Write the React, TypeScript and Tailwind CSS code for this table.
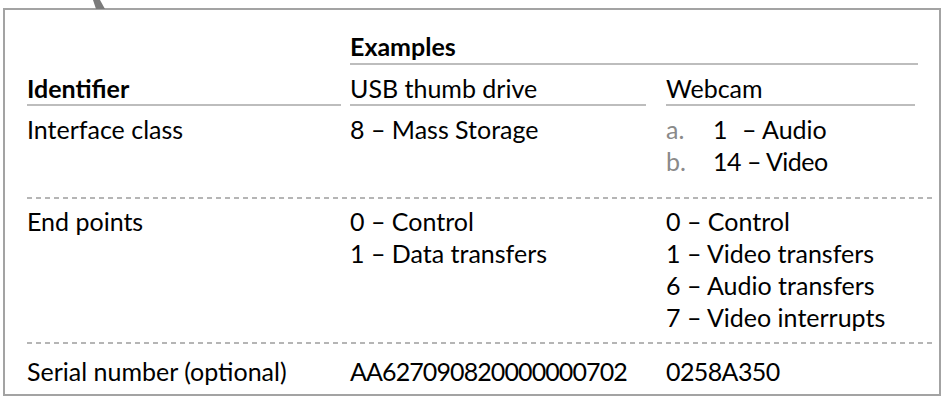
export default function App() {
  const dashed =
    "h-[2px] w-[905px] bg-[repeating-linear-gradient(to_right,#b5b5b5_0px,#b5b5b5_5px,transparent_5px,transparent_9px)]";
  const underline = "h-[2px] bg-[#bdbdbd]";
  return (
    <div className="relative w-[947px] h-[401px] bg-white overflow-hidden">
      <svg className="absolute left-0 top-0" width="120" height="12">
        <polygon points="93,0 100,0 105,9 96,9" fill="#7b7b7b" />
      </svg>
      <div className="pt-[8px] pl-[3px]">
        <div className="w-[938px] h-[388px] border-2 border-[#a3a3a3] pl-[22px] pt-[20px] font-['Lato',sans-serif] text-[25px] leading-[32px] text-black">
          {/* Examples heading */}
          <div className="ml-[323px] w-[568px]">
            <div className="font-bold">Examples</div>
            <div className={`mt-[1px] ${underline}`} />
          </div>
          {/* Column headers */}
          <div className="mt-[7px] flex">
            <div className="w-[314px] mr-[9px]">
              <div className="font-bold">Identifier</div>
              <div className={underline} />
            </div>
            <div className="w-[296px] mr-[20px]">
              <div>USB thumb drive</div>
              <div className={underline} />
            </div>
            <div className="w-[249px]">
              <div>Webcam</div>
              <div className={underline} />
            </div>
          </div>
          {/* Interface class */}
          <div className="mt-[7px] flex">
            <div className="w-[323px]">Interface class</div>
            <div className="w-[316px]">8 – Mass Storage</div>
            <div>
              <div className="flex">
                <span className="w-[47px] text-[#8a8a8a]">a.</span>
                <span className="w-[29px]">1</span>
                <span>– Audio</span>
              </div>
              <div className="flex">
                <span className="w-[47px] text-[#8a8a8a]">b.</span>
                <span className="whitespace-pre tracking-[-0.5px]">14 – Video</span>
              </div>
            </div>
          </div>
          <div className={`mt-[20px] ${dashed}`} />
          {/* End points */}
          <div className="mt-[6px] flex">
            <div className="w-[323px]">End points</div>
            <div className="w-[316px]">
              <div>0 – Control</div>
              <div>1 – Data transfers</div>
            </div>
            <div>
              <div>0 – Control</div>
              <div>1 – Video transfers</div>
              <div>6 – Audio transfers</div>
              <div>7 – Video interrupts</div>
            </div>
          </div>
          <div className={`mt-[9px] ${dashed}`} />
          {/* Serial number */}
          <div className="mt-[11px] flex">
            <div className="w-[323px]">Serial number (optional)</div>
            <div className="w-[316px] tracking-[-0.9px]">AA627090820000000702</div>
            <div className="tracking-[-0.6px]">0258A350</div>
          </div>
        </div>
      </div>
    </div>
  );
}
